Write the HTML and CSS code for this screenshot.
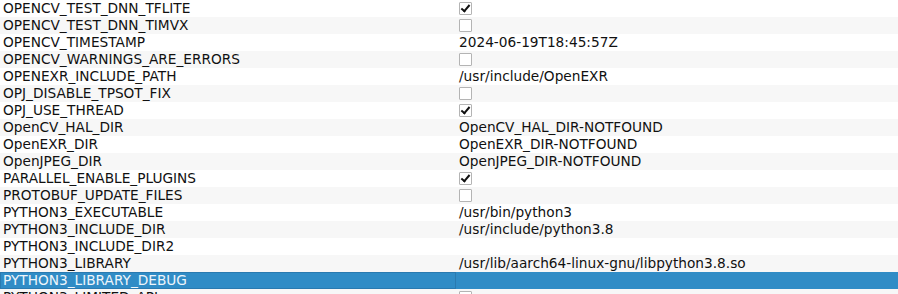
FILE: index.html
```html
<!DOCTYPE html>
<html lang="en">
<head>
    <meta charset="UTF-8">
    <title>CMake cache</title>
    <link rel="stylesheet" href="styles.css">
</head>
<body>
    <div class="cache-list">
        <div class="row"><div class="name">OPENCV_TEST_DNN_TFLITE</div><div class="value"><span class="check on"></span></div></div>
        <div class="row"><div class="name">OPENCV_TEST_DNN_TIMVX</div><div class="value"><span class="check"></span></div></div>
        <div class="row"><div class="name">OPENCV_TIMESTAMP</div><div class="value">2024-06-19T18:45:57Z</div></div>
        <div class="row"><div class="name">OPENCV_WARNINGS_ARE_ERRORS</div><div class="value"><span class="check"></span></div></div>
        <div class="row"><div class="name">OPENEXR_INCLUDE_PATH</div><div class="value">/usr/include/OpenEXR</div></div>
        <div class="row"><div class="name">OPJ_DISABLE_TPSOT_FIX</div><div class="value"><span class="check"></span></div></div>
        <div class="row"><div class="name">OPJ_USE_THREAD</div><div class="value"><span class="check on"></span></div></div>
        <div class="row"><div class="name">OpenCV_HAL_DIR</div><div class="value">OpenCV_HAL_DIR-NOTFOUND</div></div>
        <div class="row"><div class="name">OpenEXR_DIR</div><div class="value">OpenEXR_DIR-NOTFOUND</div></div>
        <div class="row"><div class="name">OpenJPEG_DIR</div><div class="value">OpenJPEG_DIR-NOTFOUND</div></div>
        <div class="row"><div class="name">PARALLEL_ENABLE_PLUGINS</div><div class="value"><span class="check on"></span></div></div>
        <div class="row"><div class="name">PROTOBUF_UPDATE_FILES</div><div class="value"><span class="check"></span></div></div>
        <div class="row"><div class="name">PYTHON3_EXECUTABLE</div><div class="value">/usr/bin/python3</div></div>
        <div class="row"><div class="name">PYTHON3_INCLUDE_DIR</div><div class="value">/usr/include/python3.8</div></div>
        <div class="row"><div class="name">PYTHON3_INCLUDE_DIR2</div><div class="value"></div></div>
        <div class="row"><div class="name">PYTHON3_LIBRARY</div><div class="value">/usr/lib/aarch64-linux-gnu/libpython3.8.so</div></div>
        <div class="row selected"><div class="name">PYTHON3_LIBRARY_DEBUG</div><div class="value"></div></div>
        <div class="row"><div class="name">PYTHON3_LIMITED_API</div><div class="value"><span class="check"></span></div></div>
    </div>
</body>
</html>
```
FILE: styles.css
```css
body {
    margin: 0;
    background: white;
    font-family: "DejaVu Sans", "Noto Sans", sans-serif;
    font-size: 13.7px;
    color: #111;
    overflow: hidden;
}

.cache-list {
    display: flex;
    flex-direction: column;
}

.row {
    display: grid;
    grid-template-columns: 456px 1fr;
    height: 17px;
    line-height: 17px;
    white-space: nowrap;
}

.row:nth-child(even) {
    background-color: #f7f7f7;
}

.name {
    padding-left: 3px;
}

.value {
    padding-left: 3px;
    display: flex;
    align-items: center;
}

.check {
    width: 11px;
    height: 11px;
    border: 1px solid #b4b4b4;
    background: white;
    border-radius: 1px;
    position: relative;
}

.check.on::after {
    content: "";
    position: absolute;
    left: 3px;
    top: 0px;
    width: 3px;
    height: 7px;
    border: solid #111;
    border-width: 0 2px 2px 0;
    transform: rotate(40deg);
}

.row.selected {
    background-color: #308cc6;
    color: #eef5fb;
}

.row.selected .name {
    box-shadow: inset 0 0 0 1px #2a7ab0;
}
```
